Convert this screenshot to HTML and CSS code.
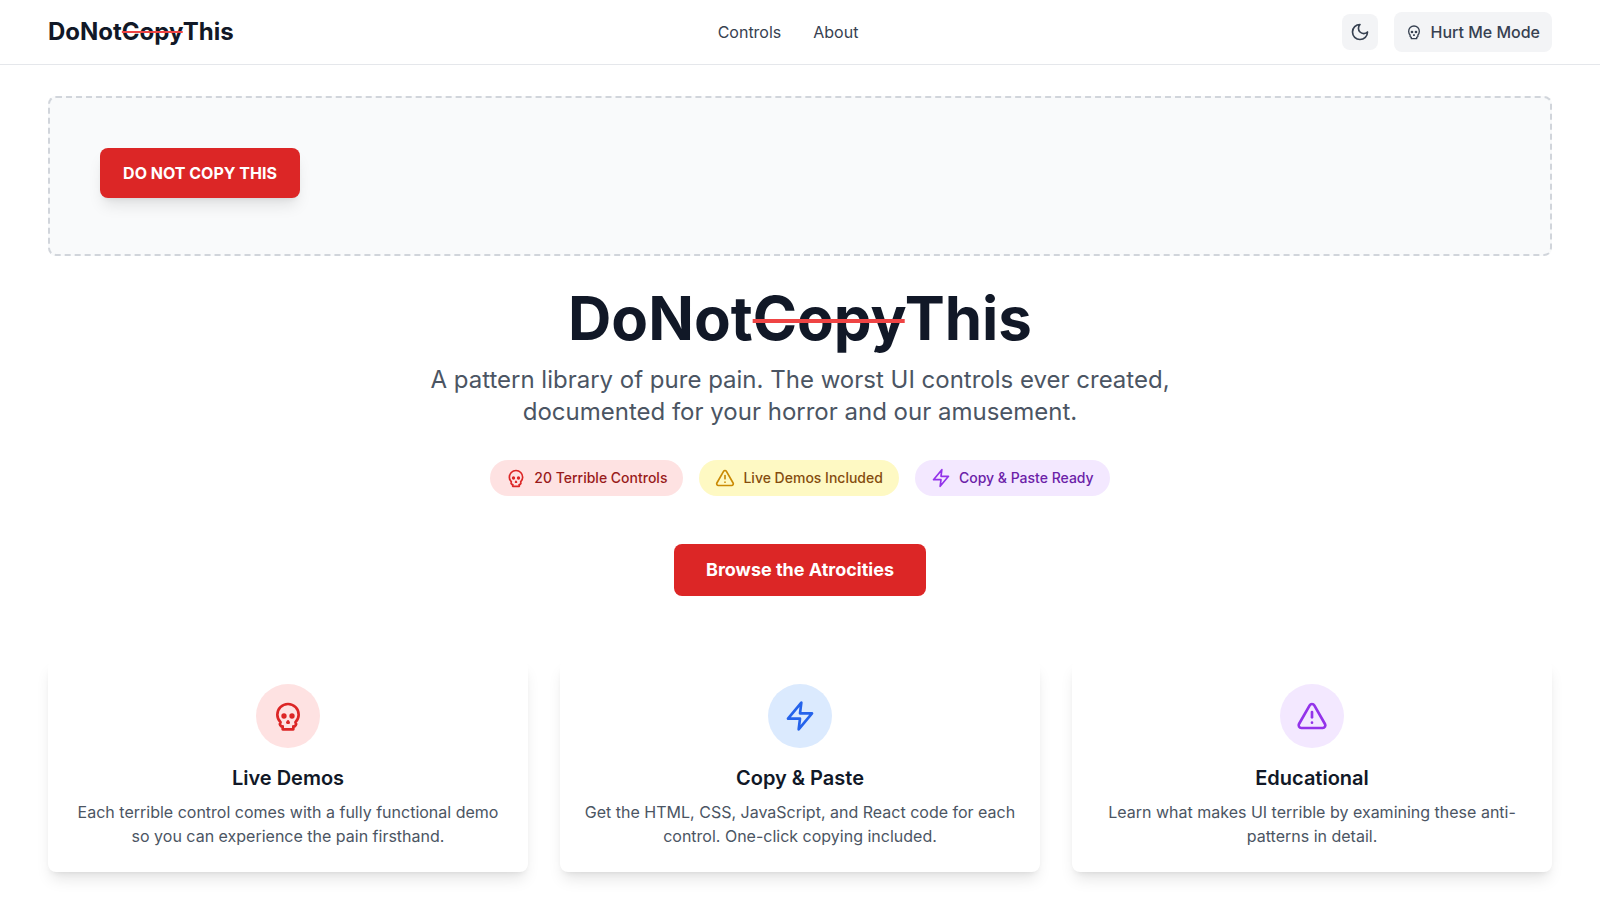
FILE: index.html
```html
<!DOCTYPE html>
<html lang="en">
<head>
  <meta charset="UTF-8" />
  <meta name="viewport" content="width=device-width, initial-scale=1.0" />
  <title>DoNotCopyThis</title>
  <link rel="stylesheet" href="styles.css">
</head>
<body>

  <!-- Shared icons -->
  <svg class="sprite" aria-hidden="true">
    <symbol id="skull" viewBox="0 0 24 24">
      <circle cx="9" cy="12" r="1" />
      <circle cx="15" cy="12" r="1" />
      <path d="M8 20v2h8v-2" />
      <path d="m12.5 17-.5-1-.5 1h1z" />
      <path d="M16 20a2 2 0 0 0 1.56-3.25 8 8 0 1 0-11.12 0A2 2 0 0 0 8 20" />
    </symbol>
    <symbol id="zap" viewBox="0 0 24 24">
      <polygon points="13 2 3 14 12 14 11 22 21 10 12 10 13 2" />
    </symbol>
    <symbol id="alert" viewBox="0 0 24 24">
      <path d="m21.73 18-8-14a2 2 0 0 0-3.48 0l-8 14A2 2 0 0 0 4 21h16a2 2 0 0 0 1.73-3Z" />
      <path d="M12 9v4" />
      <path d="M12 17h.01" />
    </symbol>
    <symbol id="moon" viewBox="0 0 24 24">
      <path d="M12 3a6 6 0 0 0 9 9 9 9 0 1 1-9-9Z" />
    </symbol>
  </svg>

  <header class="header">
    <a href="#" class="logo">DoNot<span class="strike">Copy</span>This</a>
    <nav class="nav">
      <a href="#controls">Controls</a>
      <a href="#about">About</a>
    </nav>
    <div class="actions">
      <button type="button" class="theme-btn" aria-label="Toggle theme">
        <svg class="icon icon-md"><use href="#moon" /></svg>
      </button>
      <button type="button" class="hurt-btn">
        <svg class="icon icon-sm"><use href="#skull" /></svg>
        Hurt Me Mode
      </button>
    </div>
  </header>

  <main class="main">
    <div class="playground">
      <button type="button" class="runaway-btn">DO NOT COPY THIS</button>
    </div>

    <section class="hero">
      <h1>DoNot<span class="strike">Copy</span>This</h1>
      <p class="tagline">A pattern library of pure pain. The worst UI controls ever created, documented for your horror and our amusement.</p>
      <div class="badges">
        <span class="badge badge-red"><svg class="icon icon-md"><use href="#skull" /></svg>20 Terrible Controls</span>
        <span class="badge badge-yellow"><svg class="icon icon-md"><use href="#alert" /></svg>Live Demos Included</span>
        <span class="badge badge-purple"><svg class="icon icon-md"><use href="#zap" /></svg>Copy &amp; Paste Ready</span>
      </div>
      <a href="#controls" class="browse-btn">Browse the Atrocities</a>
    </section>

    <section class="features">
      <div class="card">
        <div class="card-icon red"><svg class="icon icon-lg"><use href="#skull" /></svg></div>
        <h3>Live Demos</h3>
        <p>Each terrible control comes with a fully functional demo so you can experience the pain firsthand.</p>
      </div>
      <div class="card">
        <div class="card-icon blue"><svg class="icon icon-lg"><use href="#zap" /></svg></div>
        <h3>Copy &amp; Paste</h3>
        <p>Get the HTML, CSS, JavaScript, and React code for each control. One-click copying included.</p>
      </div>
      <div class="card">
        <div class="card-icon purple"><svg class="icon icon-lg"><use href="#alert" /></svg></div>
        <h3>Educational</h3>
        <p>Learn what makes UI terrible by examining these anti-patterns in detail.</p>
      </div>
    </section>
  </main>

</body>
</html>
```

FILE: styles.css
```css
* {
  box-sizing: border-box;
  margin: 0;
  padding: 0;
}

body {
  font-family: Inter, sans-serif;
  font-size: 16px;
  line-height: 24px;
  color: #111827;
  background: #fff;
}

a {
  color: inherit;
  text-decoration: none;
}

button {
  font: inherit;
  border: none;
  cursor: pointer;
}

.sprite {
  display: none;
}

.icon {
  flex-shrink: 0;
  fill: none;
  stroke: currentColor;
  stroke-width: 2;
  stroke-linecap: round;
  stroke-linejoin: round;
}

.icon-sm { width: 16px; height: 16px; }
.icon-md { width: 20px; height: 20px; }
.icon-lg { width: 32px; height: 32px; }

/* Header */
.header {
  display: flex;
  justify-content: space-between;
  align-items: center;
  padding: 12px 48px;
  border-bottom: 1px solid #e5e7eb;
}

.logo {
  font-size: 24px;
  line-height: 32px;
  font-weight: 700;
}

/* Red line through the word */
.strike {
  text-decoration: line-through 2px #ef4444;
}

.nav {
  display: flex;
  gap: 32px;
  color: #374151;
}

.nav a:hover {
  color: #dc2626;
}

.actions {
  display: flex;
  align-items: center;
  gap: 16px;
}

.theme-btn,
.hurt-btn {
  display: flex;
  align-items: center;
  gap: 8px;
  padding: 8px;
  border-radius: 8px;
  background: #f3f4f6;
  color: #374151;
}

.hurt-btn {
  padding: 8px 12px;
  font-weight: 500;
}

.theme-btn:hover,
.hurt-btn:hover {
  background: #e5e7eb;
}

/* Playground */
.main {
  padding: 31px 48px;
}

.playground {
  min-height: 160px;
  padding: 50px;
  border: 2px dashed #d1d5db;
  border-radius: 8px;
  background: #f9fafb;
}

.runaway-btn {
  width: 200px;
  height: 50px;
  border-radius: 8px;
  background: #dc2626;
  color: #fff;
  font-weight: 700;
  box-shadow: 0 10px 15px -3px rgba(0, 0, 0, 0.1), 0 4px 6px -4px rgba(0, 0, 0, 0.1);
}

/* Hero */
.hero {
  display: flex;
  flex-direction: column;
  align-items: center;
  padding: 32px 0 64px;
  text-align: center;
}

.hero h1 {
  margin-bottom: 16px;
  font-size: 60px;
  line-height: 60px;
  font-weight: 700;
}

.hero .strike {
  text-decoration-thickness: 4px;
}

.tagline {
  max-width: 768px;
  margin-bottom: 32px;
  font-size: 24px;
  line-height: 32px;
  color: #4b5563;
}

.badges {
  display: flex;
  flex-wrap: wrap;
  justify-content: center;
  gap: 16px;
  margin-bottom: 48px;
}

.badge {
  display: flex;
  align-items: center;
  gap: 8px;
  padding: 8px 16px;
  border-radius: 18px;
  font-size: 14px;
  line-height: 20px;
  font-weight: 500;
}

.badge-red { background: #fee2e2; color: #991b1b; }
.badge-yellow { background: #fef9c3; color: #854d0e; }
.badge-purple { background: #f3e8ff; color: #6b21a8; }

.badge-red .icon { color: #dc2626; }
.badge-yellow .icon { color: #ca8a04; }
.badge-purple .icon { color: #9333ea; }

.browse-btn {
  padding: 12px 32px;
  border-radius: 8px;
  background: #dc2626;
  color: #fff;
  font-size: 18px;
  line-height: 28px;
  font-weight: 700;
}

.runaway-btn:hover,
.browse-btn:hover {
  background: #b91c1c;
}

/* Feature cards */
.features {
  display: grid;
  grid-template-columns: repeat(3, 1fr);
  gap: 32px;
}

.card {
  display: flex;
  flex-direction: column;
  align-items: center;
  padding: 24px;
  border-radius: 8px;
  background: #fff;
  box-shadow: 0 10px 15px -3px rgba(0, 0, 0, 0.1), 0 4px 6px -4px rgba(0, 0, 0, 0.1);
  text-align: center;
}

.card-icon {
  display: flex;
  justify-content: center;
  align-items: center;
  width: 64px;
  height: 64px;
  margin-bottom: 16px;
  border-radius: 50%;
}

.card-icon.red { background: #fee2e2; color: #dc2626; }
.card-icon.blue { background: #dbeafe; color: #2563eb; }
.card-icon.purple { background: #f3e8ff; color: #9333ea; }

.card h3 {
  margin-bottom: 8px;
  font-size: 20px;
  line-height: 28px;
  font-weight: 600;
}

.card p {
  color: #4b5563;
}

@media (max-width: 768px) {
  .header,
  .main {
    padding-left: 16px;
    padding-right: 16px;
  }

  .nav {
    display: none;
  }

  .features {
    grid-template-columns: 1fr;
  }
}
```
